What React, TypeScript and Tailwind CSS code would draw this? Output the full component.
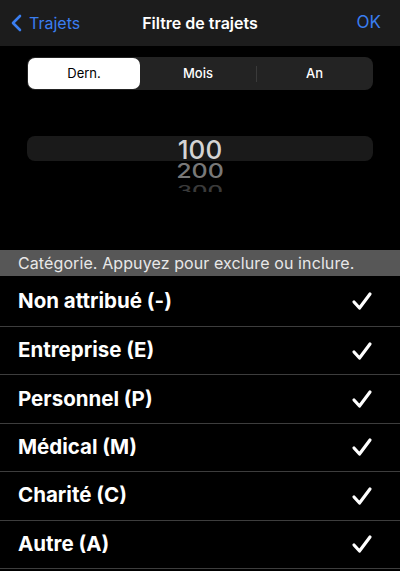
import React from "react";

const categories = [
  "Non attribué (-)",
  "Entreprise (E)",
  "Personnel (P)",
  "Médical (M)",
  "Charité (C)",
  "Autre (A)",
];

const Check = () => (
  <svg width="22" height="20" viewBox="0 0 22 20" fill="none">
    <path
      d="M3 11 L8.5 17 L19 3"
      stroke="white"
      strokeWidth="3.2"
      strokeLinecap="round"
      strokeLinejoin="round"
    />
  </svg>
);

const App = () => {
  return (
    <div
      className="w-[400px] h-[571px] overflow-hidden bg-black text-white flex flex-col"
      style={{ fontFamily: "Inter, 'Liberation Sans', sans-serif" }}
    >
      {/* nav bar */}
      <div className="h-[46px] bg-[#1c1c1c] flex items-center justify-between px-[10px] shrink-0">
        <div className="flex items-center gap-[7px] text-[#3a7ef0] text-[16px] w-[100px]">
          <svg width="12" height="18" viewBox="0 0 12 18" fill="none">
            <path
              d="M10 2 L3 9 L10 16"
              stroke="#3a7ef0"
              strokeWidth="2.6"
              strokeLinecap="round"
              strokeLinejoin="round"
            />
          </svg>
          <span>Trajets</span>
        </div>
        <div className="text-[16px] font-semibold">Filtre de trajets</div>
        <div className="w-[100px] text-right text-[#3a7ef0] text-[17px] pr-[9px]">OK</div>
      </div>

      {/* segmented control */}
      <div className="px-[27px] pt-[11px] shrink-0">
        <div className="h-[33px] bg-[#232323] rounded-[8px] flex items-center p-[1px] text-[13px]">
          <div className="w-[112px] h-full bg-white text-black rounded-[7px] flex items-center justify-center">
            Dern.
          </div>
          <div className="flex-1 h-full flex items-center justify-center font-medium">Mois</div>
          <div className="w-px h-[16px] bg-[#3a3a3a]" />
          <div className="w-[115px] h-full flex items-center justify-center font-medium">An</div>
        </div>
      </div>

      {/* picker */}
      <div className="h-[160px] shrink-0 px-[27px] pt-[46px] flex flex-col items-center">
        <div className="w-full h-[25px] bg-[#1a1a1a] rounded-[8px] flex items-center justify-center">
          <span className="text-[26px] leading-none font-medium text-[#d4d4d4] mt-[2px]">100</span>
        </div>
        <div className="h-[20px] flex items-center">
          <span className="text-[25px] leading-none font-medium text-[#787878] scale-y-[0.8] inline-block">200</span>
        </div>
        <div className="h-[11px] overflow-hidden">
          <span className="text-[24px] leading-none font-medium text-[#3a3a3a] scale-y-[0.6] inline-block -mt-[3px]">300</span>
        </div>
      </div>

      {/* section header */}
      <div className="h-[26px] bg-[#575757] flex items-center px-[18px] text-[16px] tracking-[0.1px] text-[#e8e8e8] shrink-0">
        Catégorie. Appuyez pour exclure ou inclure.
      </div>

      {/* rows */}
      <div className="flex flex-col">
        {categories.map((c, i) => (
          <div
            key={c}
            className={`${i === 0 ? "h-[51px]" : "h-[48.4px]"} border-b border-[#3d3d3d] flex items-center justify-between pl-[18px] pr-[27px]`}
          >
            <span className="text-[20.5px] font-bold">{c}</span>
            <Check />
          </div>
        ))}
      </div>
    </div>
  );
};

export default App;
